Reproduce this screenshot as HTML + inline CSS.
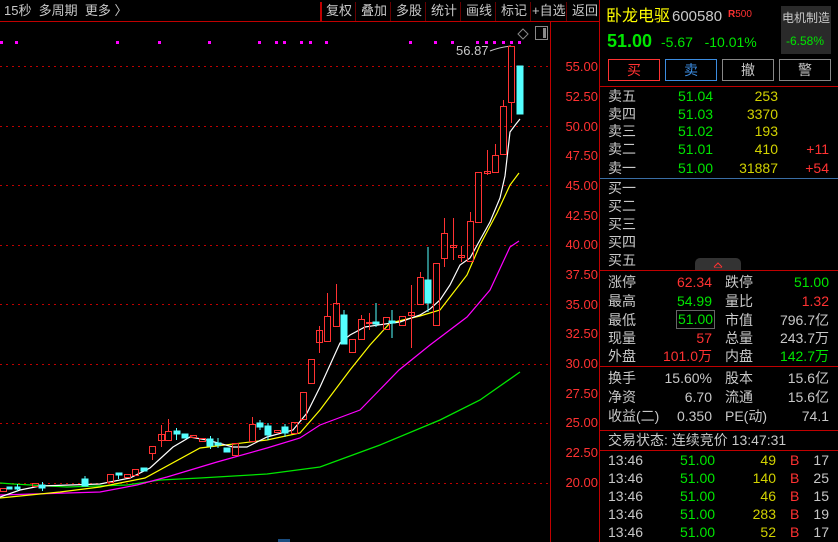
<!DOCTYPE html>
<html><head><meta charset="utf-8">
<style>
*{margin:0;padding:0;box-sizing:border-box}
body{width:838px;height:542px;background:#000;overflow:hidden;position:relative;font-family:"Liberation Sans","Noto Sans CJK SC",sans-serif;font-size:14px;color:#c8c8c8}
.a{position:absolute;white-space:nowrap;line-height:16px}
.r{text-align:right}
.g{color:#00e600}.rd{color:#ff3232}.y{color:#d2d200}.w{color:#c8c8c8}
.hl{position:absolute;left:600px;width:238px;height:1px;background:#c00000}
.btn{position:absolute;top:59px;width:52px;height:22px;border:1px solid #888;text-align:center;line-height:20px;font-size:14px}
.tb{font-size:13px}
</style></head><body>
<!-- top bar -->
<div class="a tb" style="left:4px;top:3px;color:#c8c8c8">15秒&nbsp; 多周期&nbsp; 更多 〉</div>
<div style="position:absolute;left:0;top:21px;width:600px;height:1px;background:#c00000"></div>
<div style="position:absolute;left:320px;top:2px;width:2px;height:19px;background:#c00000"></div>
<div class="a tb" style="left:326px;top:3px">复权</div>
<div class="a tb" style="left:361px;top:3px">叠加</div>
<div class="a tb" style="left:396px;top:3px">多股</div>
<div class="a tb" style="left:431px;top:3px">统计</div>
<div class="a tb" style="left:466px;top:3px">画线</div>
<div class="a tb" style="left:501px;top:3px">标记</div>
<div class="a tb" style="left:532px;top:3px">+自选</div>
<div class="a tb" style="left:572px;top:3px">返回</div>
<div style="position:absolute;left:355px;top:2px;width:1px;height:19px;background:#600"></div>
<div style="position:absolute;left:390px;top:2px;width:1px;height:19px;background:#600"></div>
<div style="position:absolute;left:425px;top:2px;width:1px;height:19px;background:#600"></div>
<div style="position:absolute;left:460px;top:2px;width:1px;height:19px;background:#600"></div>
<div style="position:absolute;left:495px;top:2px;width:1px;height:19px;background:#600"></div>
<div style="position:absolute;left:530px;top:2px;width:1px;height:19px;background:#600"></div>
<div style="position:absolute;left:566px;top:2px;width:1px;height:19px;background:#600"></div>

<svg width="600" height="542" style="position:absolute;left:0;top:0">
<g stroke="#c00000" stroke-width="1" stroke-dasharray="2,4">
<line x1="0" y1="66.5" x2="550" y2="66.5"/><line x1="0" y1="126.5" x2="550" y2="126.5"/>
<line x1="0" y1="185.5" x2="550" y2="185.5"/><line x1="0" y1="245.5" x2="550" y2="245.5"/>
<line x1="0" y1="304.5" x2="550" y2="304.5"/><line x1="0" y1="364.5" x2="550" y2="364.5"/>
<line x1="0" y1="423.5" x2="550" y2="423.5"/><line x1="0" y1="483.5" x2="550" y2="483.5"/>
</g>
<line x1="550.5" y1="22" x2="550.5" y2="542" stroke="#c00000"/>
<line x1="599.5" y1="0" x2="599.5" y2="542" stroke="#c00000"/>
<g fill="#ff3232" font-family="Liberation Sans" font-size="13" text-anchor="end">
<text x="598" y="71">55.00</text><text x="598" y="101">52.50</text><text x="598" y="131">50.00</text>
<text x="598" y="160">47.50</text><text x="598" y="190">45.00</text><text x="598" y="220">42.50</text>
<text x="598" y="249">40.00</text><text x="598" y="279">37.50</text><text x="598" y="309">35.00</text>
<text x="598" y="338">32.50</text><text x="598" y="368">30.00</text><text x="598" y="398">27.50</text>
<text x="598" y="427">25.00</text><text x="598" y="457">22.50</text><text x="598" y="487">20.00</text>
</g>
<path d="M523 29 L528 34 L523 39 L518 34 Z" fill="none" stroke="#888"/>
<rect x="535.5" y="26.5" width="12" height="13" fill="none" stroke="#888"/>
<rect x="543" y="28" width="3" height="10" fill="#888"/>
<g fill="#ff00ff">
<rect x="0" y="41" width="3" height="3"/><rect x="15" y="41" width="3" height="3"/><rect x="116" y="41" width="3" height="3"/>
<rect x="158" y="41" width="3" height="3"/><rect x="208" y="41" width="3" height="3"/><rect x="258" y="41" width="3" height="3"/>
<rect x="275" y="41" width="3" height="3"/><rect x="283" y="41" width="3" height="3"/><rect x="300" y="41" width="3" height="3"/>
<rect x="309" y="41" width="3" height="3"/><rect x="325" y="41" width="3" height="3"/><rect x="409" y="41" width="3" height="3"/>
<rect x="434" y="41" width="3" height="3"/><rect x="451" y="41" width="3" height="3"/><rect x="476" y="41" width="3" height="3"/>
<rect x="485" y="41" width="3" height="3"/><rect x="493" y="41" width="3" height="3"/><rect x="502" y="41" width="3" height="3"/>
<rect x="510" y="41" width="3" height="3"/><rect x="518" y="41" width="3" height="3"/>
</g>
<text x="456" y="55" fill="#c8c8c8" font-family="Liberation Sans" font-size="13">56.87</text>
<path d="M490 51 Q500 47 511 46" stroke="#c8c8c8" fill="none"/>
<polyline fill="none" stroke="#00e600" stroke-width="1.3" points="0,483 13,484 67,487 127,485 160,480 200,478 267,474 320,467 380,445 440,420 480,400 520,372"/>
<polyline fill="none" stroke="#ff00ff" stroke-width="1.2" points="0,495 100,492 137,485 167,477 217,462 267,448 300,438 320,425 360,410 399,370 430,345 467,317 490,290 510,247 519,241"/>
<polyline fill="none" stroke="#ffff00" stroke-width="1.2" points="0,498 60,492 100,487 145,478 200,448 267,440 300,433 320,410 350,370 370,345 390,323 420,316 440,310 467,275 480,245 497,213 510,185 519,173"/>
<polyline fill="none" stroke="#ffffff" stroke-width="1.2" points="0,497 20,490 40,486 100,484 130,478 150,468 173,447 190,437 207,440 233,447 247,447 267,437 293,430 307,413 320,387 330,365 340,343 350,335 365,327 385,324 400,322 420,315 430,309 440,300 450,285 460,265 470,258 480,240 490,222 500,198 505,176 510,132 516,124 520,119"/>
<g fill="none" stroke="#ff3232" stroke-width="1">
<rect x="0.5" y="488.5" width="6" height="3"/>
<rect x="32.5" y="483.5" width="6" height="3"/>
<rect x="107.5" y="474.5" width="6" height="8"/>
<rect x="124.5" y="474.5" width="6" height="3"/>
<rect x="132.5" y="469.5" width="6" height="6"/>
<rect x="149.5" y="446.5" width="6" height="7"/><line x1="152.5" y1="453" x2="152.5" y2="460"/>
<rect x="158.5" y="434.5" width="6" height="6"/><line x1="161.5" y1="425" x2="161.5" y2="447"/>
<rect x="165.5" y="431.5" width="6" height="9"/><line x1="168.5" y1="419" x2="168.5" y2="431"/>
<rect x="190.5" y="435.5" width="6" height="2"/>
<rect x="199.5" y="438.5" width="6" height="3"/>
<rect x="232.5" y="443.5" width="6" height="12"/>
<rect x="249.5" y="424.5" width="6" height="17"/><line x1="252.5" y1="417" x2="252.5" y2="424"/>
<rect x="274.5" y="430.5" width="6" height="2"/>
<rect x="291.5" y="422.5" width="6" height="11"/>
<rect x="300.5" y="392.5" width="6" height="27"/>
<rect x="308.5" y="359.5" width="6" height="24"/>
<rect x="316.5" y="330.5" width="6" height="12"/><line x1="319.5" y1="326" x2="319.5" y2="353"/>
<rect x="324.5" y="316.5" width="6" height="25"/><line x1="327.5" y1="293" x2="327.5" y2="316"/>
<rect x="333.5" y="303.5" width="6" height="23"/><line x1="336.5" y1="284" x2="336.5" y2="303"/>
<rect x="349.5" y="339.5" width="6" height="13"/>
<rect x="358.5" y="319.5" width="6" height="20"/><line x1="361.5" y1="315" x2="361.5" y2="319"/>
<rect x="366.5" y="322.5" width="6" height="1"/><line x1="369.5" y1="313" x2="369.5" y2="330"/>
<rect x="383.5" y="317.5" width="6" height="12"/>
<rect x="399.5" y="316.5" width="6" height="9"/>
<rect x="408.5" y="312.5" width="6" height="3"/><line x1="411.5" y1="285" x2="411.5" y2="348"/>
<rect x="417.5" y="277.5" width="6" height="27"/><line x1="420.5" y1="272" x2="420.5" y2="277"/>
<rect x="433.5" y="263.5" width="6" height="62"/>
<rect x="441.5" y="233.5" width="6" height="25"/><line x1="444.5" y1="218" x2="444.5" y2="233"/><line x1="444.5" y1="259" x2="444.5" y2="267"/>
<rect x="450.5" y="245.5" width="6" height="2"/><line x1="453.5" y1="218" x2="453.5" y2="260"/>
<rect x="458.5" y="255.5" width="6" height="2"/><line x1="461.5" y1="246" x2="461.5" y2="262"/>
<rect x="467.5" y="221.5" width="6" height="40"/><line x1="470.5" y1="212" x2="470.5" y2="221"/>
<rect x="475.5" y="172.5" width="6" height="50"/>
<rect x="484.5" y="171.5" width="6" height="2"/><line x1="487.5" y1="150" x2="487.5" y2="175"/>
<rect x="492.5" y="155.5" width="6" height="17"/><line x1="495.5" y1="144" x2="495.5" y2="155"/>
<rect x="500.5" y="106.5" width="6" height="48"/><line x1="503.5" y1="100" x2="503.5" y2="106"/>
<rect x="508.5" y="46.5" width="6" height="56"/><line x1="511.5" y1="102" x2="511.5" y2="123"/>
</g>
<g fill="#54ffff" stroke="#54ffff">
<rect x="7" y="487" width="5" height="2"/>
<rect x="15" y="487" width="5" height="2"/><line x1="17.5" y1="484" x2="17.5" y2="491"/>
<rect x="39" y="485" width="6" height="3"/><line x1="42.5" y1="482" x2="42.5" y2="491"/>
<rect x="82" y="479" width="6" height="7"/><line x1="85" y1="476" x2="85" y2="486"/>
<rect x="116" y="473" width="6" height="2"/><line x1="118.5" y1="473" x2="118.5" y2="479"/>
<rect x="141" y="468" width="6" height="3"/>
<rect x="174" y="431" width="6" height="3"/><line x1="176.5" y1="428" x2="176.5" y2="440"/>
<rect x="182" y="434" width="6" height="4"/>
<rect x="207" y="439" width="6" height="7"/><line x1="210.5" y1="436" x2="210.5" y2="449"/>
<rect x="215" y="443" width="6" height="2"/><line x1="218" y1="438" x2="218" y2="448"/>
<rect x="224" y="448" width="6" height="4"/>
<rect x="257" y="423" width="6" height="4"/><line x1="260" y1="420" x2="260" y2="430"/>
<rect x="265" y="426" width="6" height="9"/><line x1="268" y1="423" x2="268" y2="440"/>
<rect x="282" y="427" width="6" height="6"/><line x1="285" y1="424" x2="285" y2="437"/>
<rect x="341" y="315" width="6" height="29"/><line x1="344" y1="310" x2="344" y2="315"/>
<rect x="373" y="322" width="6" height="2"/><line x1="376" y1="303" x2="376" y2="327"/>
<rect x="389" y="321" width="6" height="2"/><line x1="392" y1="310" x2="392" y2="338"/>
<rect x="425" y="280" width="6" height="23"/><line x1="428" y1="247" x2="428" y2="312"/>
<rect x="517" y="66" width="6" height="48"/>
</g>
<rect x="278" y="539" width="12" height="3" fill="#1a4d80"/>
</svg>

<div class="a" style="left:606px;top:7px;font-size:16px;line-height:20px;color:#ffff00">卧龙电驱</div>
<div class="a" style="left:672px;top:7px;font-size:15px;line-height:20px;color:#c8c8c8">600580</div>
<div class="a" style="left:728px;top:7px;font-size:10px;color:#ff3232"><b>R</b>500</div>
<div style="position:absolute;left:781px;top:6px;width:50px;height:48px;background:#2a2a2a"></div>
<div class="a" style="left:782px;top:10px;font-size:12px">电机制造</div>
<div class="a g" style="left:786px;top:33px;font-size:12px">-6.58%</div>
<div class="a g" style="left:607px;top:30px;font-size:18px;line-height:22px;font-weight:bold">51.00</div>
<div class="a g" style="left:661px;top:32px;font-size:14px;line-height:20px">-5.67&nbsp;&nbsp; -10.01%</div>
<div class="btn" style="left:608px;border-color:#ff3232;color:#ff3232">买</div>
<div class="btn" style="left:665px;border-color:#3c8ce0;color:#3c8ce0">卖</div>
<div class="btn" style="left:722px">撤</div>
<div class="btn" style="left:779px">警</div>
<div class="hl" style="top:86px"></div>

<div class="a" style="left:608px;top:88px">卖五</div><div class="a g" style="left:678px;top:88px">51.04</div><div class="a y r" style="left:720px;width:58px;top:88px">253</div>
<div class="a" style="left:608px;top:106px">卖四</div><div class="a g" style="left:678px;top:106px">51.03</div><div class="a y r" style="left:720px;width:58px;top:106px">3370</div>
<div class="a" style="left:608px;top:123px">卖三</div><div class="a g" style="left:678px;top:123px">51.02</div><div class="a y r" style="left:720px;width:58px;top:123px">193</div>
<div class="a" style="left:608px;top:141px">卖二</div><div class="a g" style="left:678px;top:141px">51.01</div><div class="a y r" style="left:720px;width:58px;top:141px">410</div><div class="a rd r" style="left:790px;width:39px;top:141px">+11</div>
<div class="a" style="left:608px;top:160px">卖一</div><div class="a g" style="left:678px;top:160px">51.00</div><div class="a y r" style="left:720px;width:58px;top:160px">31887</div><div class="a rd r" style="left:790px;width:39px;top:160px">+54</div>
<div style="position:absolute;left:600px;top:178px;width:238px;height:1px;background:#3a6ea5"></div>
<div class="a" style="left:608px;top:180px">买一</div>
<div class="a" style="left:608px;top:198px">买二</div>
<div class="a" style="left:608px;top:216px">买三</div>
<div class="a" style="left:608px;top:234px">买四</div>
<div class="a" style="left:608px;top:252px">买五</div>
<div style="position:absolute;left:695px;top:258px;width:46px;height:13px;background:#333;border-radius:5px 5px 0 0"></div>
<svg width="10" height="6" style="position:absolute;left:713px;top:262px"><path d="M1 5 L5 1 L9 5 M1 6 L9 6" stroke="#ff3232" fill="none"/></svg>
<div class="hl" style="top:270px"></div>

<div class="a" style="left:608px;top:274px">涨停</div><div class="a rd r" style="left:650px;width:62px;top:274px">62.34</div><div class="a" style="left:725px;top:274px">跌停</div><div class="a g r" style="left:770px;width:59px;top:274px">51.00</div>
<div class="a" style="left:608px;top:293px">最高</div><div class="a g r" style="left:650px;width:62px;top:293px">54.99</div><div class="a" style="left:725px;top:293px">量比</div><div class="a rd r" style="left:770px;width:59px;top:293px">1.32</div>
<div class="a" style="left:608px;top:312px">最低</div><div class="a g" style="left:676px;top:310px;border:1px solid #666;padding:0 1px;line-height:17px">51.00</div><div class="a" style="left:725px;top:312px">市值</div><div class="a r" style="left:760px;width:69px;top:312px">796.7亿</div>
<div class="a" style="left:608px;top:330px">现量</div><div class="a rd r" style="left:650px;width:62px;top:330px">57</div><div class="a" style="left:725px;top:330px">总量</div><div class="a r" style="left:760px;width:69px;top:330px">243.7万</div>
<div class="a" style="left:608px;top:348px">外盘</div><div class="a rd r" style="left:650px;width:62px;top:348px">101.0万</div><div class="a" style="left:725px;top:348px">内盘</div><div class="a g r" style="left:760px;width:69px;top:348px">142.7万</div>
<div class="hl" style="top:366px"></div>

<div class="a" style="left:608px;top:370px">换手</div><div class="a r" style="left:650px;width:62px;top:370px">15.60%</div><div class="a" style="left:725px;top:370px">股本</div><div class="a r" style="left:760px;width:69px;top:370px">15.6亿</div>
<div class="a" style="left:608px;top:389px">净资</div><div class="a r" style="left:650px;width:62px;top:389px">6.70</div><div class="a" style="left:725px;top:389px">流通</div><div class="a r" style="left:760px;width:69px;top:389px">15.6亿</div>
<div class="a" style="left:608px;top:408px">收益(二)</div><div class="a r" style="left:650px;width:62px;top:408px">0.350</div><div class="a" style="left:725px;top:408px">PE(动)</div><div class="a r" style="left:760px;width:69px;top:408px">74.1</div>
<div class="hl" style="top:430px"></div>
<div class="a" style="left:608px;top:432px">交易状态: 连续竞价 13:47:31</div>
<div class="hl" style="top:450px"></div>

<div class="a" style="left:608px;top:452px">13:46</div><div class="a g" style="left:680px;top:452px">51.00</div><div class="a y r" style="left:730px;width:46px;top:452px">49</div><div class="a rd" style="left:790px;top:452px">B</div><div class="a r" style="left:800px;width:29px;top:452px">17</div>
<div class="a" style="left:608px;top:470px">13:46</div><div class="a g" style="left:680px;top:470px">51.00</div><div class="a y r" style="left:730px;width:46px;top:470px">140</div><div class="a rd" style="left:790px;top:470px">B</div><div class="a r" style="left:800px;width:29px;top:470px">25</div>
<div class="a" style="left:608px;top:488px">13:46</div><div class="a g" style="left:680px;top:488px">51.00</div><div class="a y r" style="left:730px;width:46px;top:488px">46</div><div class="a rd" style="left:790px;top:488px">B</div><div class="a r" style="left:800px;width:29px;top:488px">15</div>
<div class="a" style="left:608px;top:506px">13:46</div><div class="a g" style="left:680px;top:506px">51.00</div><div class="a y r" style="left:730px;width:46px;top:506px">283</div><div class="a rd" style="left:790px;top:506px">B</div><div class="a r" style="left:800px;width:29px;top:506px">19</div>
<div class="a" style="left:608px;top:524px">13:46</div><div class="a g" style="left:680px;top:524px">51.00</div><div class="a y r" style="left:730px;width:46px;top:524px">52</div><div class="a rd" style="left:790px;top:524px">B</div><div class="a r" style="left:800px;width:29px;top:524px">17</div>
</body></html>
